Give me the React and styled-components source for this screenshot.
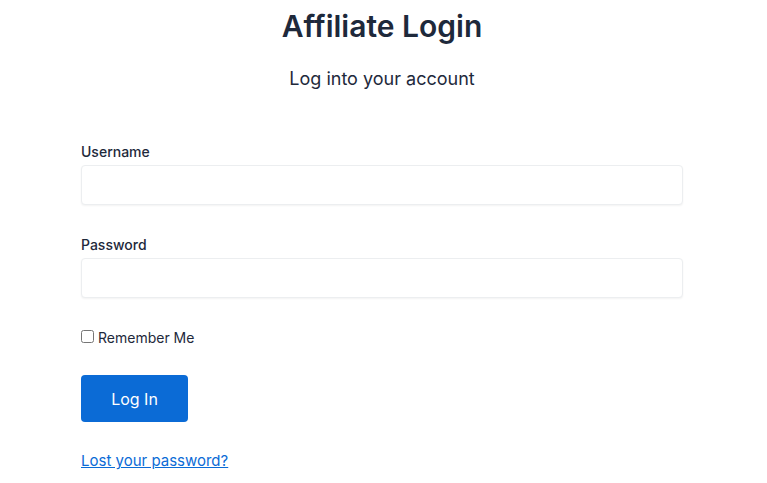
import React, { useState } from 'react';
import styled, { createGlobalStyle } from 'styled-components';

const GlobalStyle = createGlobalStyle`
  body {
    margin: 0;
    background: #ffffff;
    font-family: Inter, "Noto Sans", Arial, sans-serif;
    color: #1e293b;
  }
`;

const Page = styled.div`
  width: 767px;
  padding: 0 84px 0 81px;
  box-sizing: border-box;
`;

const Title = styled.h1`
  margin: 0;
  padding-top: 6px;
  text-align: center;
  font-size: 30px;
  font-weight: 600;
  line-height: 40px;
  color: #1e293b;
`;

const Subtitle = styled.p`
  margin: 20px 0 0;
  text-align: center;
  font-size: 18px;
  line-height: 26px;
  font-weight: 400;
  color: #1e293b;
`;

const Form = styled.form`
  margin-top: 50px;
  display: flex;
  flex-direction: column;
`;

const Field = styled.div`
  display: flex;
  flex-direction: column;
  margin-bottom: ${props => props.gap || 0}px;
`;

const Label = styled.label`
  font-size: 14px;
  line-height: 20px;
  font-weight: 500;
  color: #1e293b;
  margin-bottom: 3px;
`;

const Input = styled.input`
  height: 40px;
  box-sizing: border-box;
  border: 1px solid #eceef0;
  border-radius: 4px;
  box-shadow: 0 1px 2px rgba(0, 0, 0, 0.05);
  padding: 0 10px;
  font-size: 15px;
  font-family: inherit;
  outline: none;
`;

const Remember = styled.label`
  display: flex;
  align-items: center;
  gap: 4px;
  font-size: 14px;
  line-height: 20px;
  color: #1e293b;
  margin-top: 30px;
`;

const Check = styled.input`
  margin: -4px 0 0 0;
  width: 13px;
  height: 13px;
`;

const Button = styled.button`
  margin-top: 27px;
  width: 107px;
  height: 47px;
  background-color: #0b6bd6;
  border: none;
  border-radius: 4px;
  color: #ffffff;
  font-family: inherit;
  font-size: 16px;
  cursor: pointer;
`;

const Lost = styled.a`
  margin-top: 29px;
  align-self: flex-start;
  font-size: 15px;
  line-height: 20px;
  color: #0b6bd6;
  text-decoration: underline;
`;

const App = () => {
  const [username, setUsername] = useState('');
  const [password, setPassword] = useState('');
  const [remember, setRemember] = useState(false);

  return (
    <>
      <GlobalStyle />
      <Page>
        <Title>Affiliate Login</Title>
        <Subtitle>Log into your account</Subtitle>
        <Form onSubmit={e => e.preventDefault()}>
          <Field gap={30}>
            <Label htmlFor="username">Username</Label>
            <Input id="username" value={username} onChange={e => setUsername(e.target.value)} />
          </Field>
          <Field>
            <Label htmlFor="password">Password</Label>
            <Input id="password" type="password" value={password} onChange={e => setPassword(e.target.value)} />
          </Field>
          <Remember>
            <Check type="checkbox" checked={remember} onChange={e => setRemember(e.target.checked)} />
            Remember Me
          </Remember>
          <div>
            <Button type="submit">Log In</Button>
          </div>
          <Lost href="#">Lost your password?</Lost>
        </Form>
      </Page>
    </>
  );
};

export default App;
